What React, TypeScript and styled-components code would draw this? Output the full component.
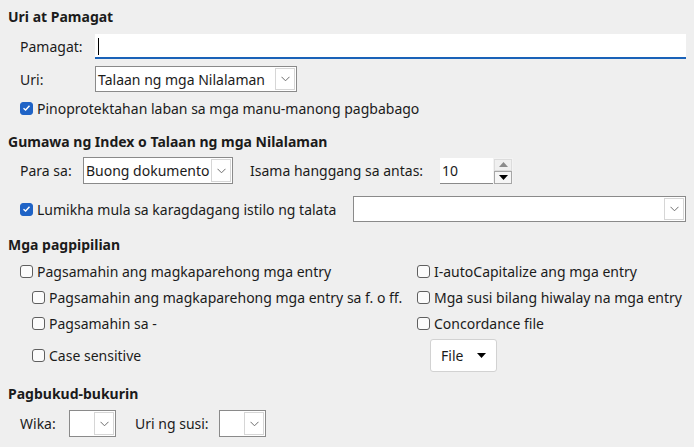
import React from "react";
import styled, { createGlobalStyle } from "styled-components";

const Global = createGlobalStyle`
  html, body { margin: 0; padding: 0; background: #efefef; }
  body { font-family: "Noto Sans", "Open Sans", sans-serif; font-size: 14px; color: #1b1b1b; }
  * { box-sizing: border-box; }
`;

const Page = styled.div`
  width: 694px;
  height: 447px;
  padding: 7px 8px 0 8px;
  display: flex;
  flex-direction: column;
  overflow: hidden;
`;

const Heading = styled.div<{ $mt?: number }>`
  font-weight: 700;
  height: 20px;
  line-height: 20px;
  margin-top: ${(p) => p.$mt ?? 0}px;
`;

const Row = styled.div<{ $mt?: number; $h: number; $indent?: number }>`
  display: flex;
  align-items: center;
  height: ${(p) => p.$h}px;
  margin-top: ${(p) => p.$mt ?? 0}px;
  padding-left: ${(p) => p.$indent ?? 12}px;
`;

const Label = styled.span<{ $w?: number; $ml?: number }>`
  display: inline-block;
  width: ${(p) => (p.$w ? `${p.$w}px` : "auto")};
  margin-left: ${(p) => p.$ml ?? 0}px;
  white-space: nowrap;
`;

const TextInput = styled.div`
  flex: 1;
  height: 25px;
  background: #fff;
  border-bottom: 2px solid #1a62b8;
  position: relative;
`;

const Caret = styled.span`
  position: absolute;
  left: 3px;
  top: 4px;
  width: 1px;
  height: 17px;
  background: #000;
`;

const SelectBox = styled.div<{ $w: number; $h?: number }>`
  width: ${(p) => p.$w}px;
  height: ${(p) => p.$h ?? 26}px;
  background: #fff;
  border: 1px solid #8a8a8a;
  display: flex;
  align-items: stretch;
  flex-shrink: 0;
`;

const SelectText = styled.span`
  flex: 1;
  padding-left: 2px;
  display: flex;
  align-items: center;
  white-space: nowrap;
  overflow: hidden;
`;

const ArrowBtn = styled.span`
  width: 20px;
  margin: 1px;
  border: 1px solid #d6d6d6;
  background: #fff;
  display: flex;
  align-items: center;
  justify-content: center;
`;

const Chevron = () => (
  <svg width="9" height="6" viewBox="0 0 9 6">
    <path d="M0.5 0.8 L4.5 4.8 L8.5 0.8" fill="none" stroke="#6d6d6d" strokeWidth="1" />
  </svg>
);

const Select = ({ w, text, h }: { w: number; text?: string; h?: number }) => (
  <SelectBox $w={w} $h={h}>
    <SelectText>{text}</SelectText>
    <ArrowBtn>
      <Chevron />
    </ArrowBtn>
  </SelectBox>
);

const CheckRow = styled.label<{ $ml?: number }>`
  display: flex;
  align-items: center;
  gap: 4px;
  margin-left: ${(p) => p.$ml ?? 0}px;
  white-space: nowrap;
`;

const Box = styled.span<{ $checked?: boolean }>`
  width: 13px;
  height: 13px;
  border-radius: 3px;
  flex-shrink: 0;
  display: flex;
  align-items: center;
  justify-content: center;
  background: ${(p) => (p.$checked ? "#1f63c6" : "#fbfbfb")};
  border: 1px solid ${(p) => (p.$checked ? "#1f63c6" : "#5f5f5f")};
`;

const Check = ({ checked, children, ml }: { checked?: boolean; children: React.ReactNode; ml?: number }) => (
  <CheckRow $ml={ml}>
    <Box $checked={checked}>
      {checked && (
        <svg width="9" height="8" viewBox="0 0 9 8">
          <path d="M1.5 4.2 L3.6 6 L7.5 1.8" fill="none" stroke="#fff" strokeWidth="1.4" />
        </svg>
      )}
    </Box>
    <span>{children}</span>
  </CheckRow>
);

const Spin = styled.div`
  display: flex;
  height: 26px;
  margin-left: 17px;
`;

const SpinField = styled.div`
  width: 53px;
  background: #fff;
  border-bottom: 1px solid #8a8a8a;
  padding-left: 2px;
  display: flex;
  align-items: center;
`;

const SpinBtns = styled.div`
  width: 20px;
  display: flex;
  flex-direction: column;
  background: #f3f3f3;
  padding: 1px 1px 0 1px;
`;

const SpinBtn = styled.div<{ $down?: boolean }>`
  flex: 1;
  border: 1px solid ${(p) => (p.$down ? "#a6a6a6" : "#dcdcdc")};
  background: ${(p) => (p.$down ? "#f6f6f6" : "#f0f0f0")};
  display: flex;
  align-items: center;
  justify-content: center;
`;

const Tri = ({ up, color }: { up?: boolean; color: string }) => (
  <svg width="9" height="5" viewBox="0 0 9 5">
    <path d={up ? "M0 5 L4.5 0 L9 5 Z" : "M0 0 L9 0 L4.5 5 Z"} fill={color} />
  </svg>
);

const OptionsGrid = styled.div`
  display: grid;
  grid-template-columns: 397px 1fr;
  grid-template-rows: 20px 20px 20px 32px;
  row-gap: 6px;
  margin-top: 6px;
  padding-left: 12px;
  align-items: center;
`;

const FileBtn = styled.div`
  width: 67px;
  height: 33px;
  margin-left: 13px;
  background: #fff;
  border: 1px solid #d2d2d2;
  border-radius: 3px;
  display: flex;
  align-items: center;
  gap: 14px;
  padding-left: 10px;
`;

export default function App() {
  return (
    <>
      <Global />
      <Page>
        <Heading>Uri at Pamagat</Heading>
        <Row $h={25} $mt={7}>
          <Label $w={75}>Pamagat:</Label>
          <TextInput>
            <Caret />
          </TextInput>
        </Row>
        <Row $h={26} $mt={7}>
          <Label $w={75}>Uri:</Label>
          <Select w={202} text="Talaan ng mga Nilalaman" />
        </Row>
        <Row $h={20} $mt={6}>
          <Check checked>Pinoprotektahan laban sa mga manu-manong pagbabago</Check>
        </Row>

        <Heading $mt={14}>Gumawa ng Index o Talaan ng mga Nilalaman</Heading>
        <Row $h={27} $mt={5}>
          <Label $w={63}>Para sa:</Label>
          <Select w={150} h={27} text="Buong dokumento" />
          <Label $ml={17}>Isama hanggang sa antas:</Label>
          <Spin>
            <SpinField>10</SpinField>
            <SpinBtns>
              <SpinBtn>
                <Tri up color="#8c8c8c" />
              </SpinBtn>
              <SpinBtn $down>
                <Tri color="#000" />
              </SpinBtn>
            </SpinBtns>
          </Spin>
        </Row>
        <Row $h={26} $mt={12}>
          <Check checked>Lumikha mula sa karagdagang istilo ng talata</Check>
          <span style={{ flex: 1 }} />
          <Select w={333} />
        </Row>

        <Heading $mt={13}>Mga pagpipilian</Heading>
        <OptionsGrid>
          <Check>Pagsamahin ang magkaparehong mga entry</Check>
          <Check>I-autoCapitalize ang mga entry</Check>
          <Check ml={12}>Pagsamahin ang magkaparehong mga entry sa f. o ff.</Check>
          <Check>Mga susi bilang hiwalay na mga entry</Check>
          <Check ml={12}>Pagsamahin sa -</Check>
          <Check>Concordance file</Check>
          <Check ml={12}>Case sensitive</Check>
          <FileBtn>
            <span>File</span>
            <Tri color="#000" />
          </FileBtn>
        </OptionsGrid>

        <Heading $mt={13}>Pagbukud-bukurin</Heading>
        <Row $h={27} $mt={6}>
          <Label $w={49}>Wika:</Label>
          <Select w={47} h={27} />
          <Label $ml={19} $w={84}>Uri ng susi:</Label>
          <Select w={47} h={27} />
        </Row>
      </Page>
    </>
  );
}
